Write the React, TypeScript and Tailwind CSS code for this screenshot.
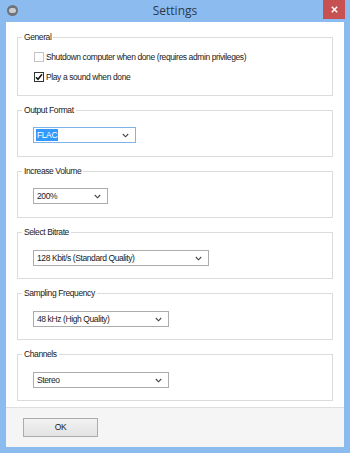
import React from "react";

function Chevron() {
  return (
    <svg width="7" height="5" viewBox="0 0 7 5" className="shrink-0">
      <path d="M0.8 1 L3.5 3.8 L6.2 1" fill="none" stroke="#444" strokeWidth="1.1" />
    </svg>
  );
}

function Select({ value, width, focused }: { value: string; width: string; focused?: boolean }) {
  return (
    <div
      className={`flex h-[16px] items-center justify-between border bg-white pl-[2px] pr-[6px] ${width} ${
        focused ? "border-[#7eb4ea]" : "border-[#acacac]"
      }`}
    >
      {focused ? (
        <span className="bg-[#3399ff] px-[1px] leading-[12px] text-white">{value}</span>
      ) : (
        <span className="px-[1px] leading-[12px] text-[#1a1a1a]">{value}</span>
      )}
      <Chevron />
    </div>
  );
}

function Group({ label, h, children }: { label: string; h: string; children: React.ReactNode }) {
  return (
    <fieldset className={`m-0 border border-[#dcdcdc] p-0 ${h}`}>
      <legend className="ml-[4px] px-[2px] leading-[14px] text-[#1a1a1a]">{label}</legend>
      {children}
    </fieldset>
  );
}

export default function App() {
  return (
    <div
      className="flex h-[453px] w-[350px] flex-col bg-[#8cbbf0] text-[8.5px] tracking-[-0.4px]"
      style={{ fontFamily: '"Liberation Sans", Arial, sans-serif' }}
    >
      {/* title bar */}
      <div className="relative flex h-[22px] shrink-0 items-center justify-center">
        <div className="absolute left-[7px] top-[5px] flex h-[11px] w-[11px] items-center justify-center rounded-full bg-[#6f7378]">
          <div className="h-[5px] w-[7px] rounded-full bg-[#c9ccd0]" />
        </div>
        <span
          className="text-[12px] tracking-normal text-[#2b3a4a]"
          style={{ fontFamily: '"Open Sans", "Liberation Sans", sans-serif' }}
        >
          Settings
        </span>
        <div className="absolute right-[5px] top-0 flex h-[19px] w-[22px] items-center justify-center bg-[#c75050]">
          <svg width="7" height="7" viewBox="0 0 7 7">
            <path d="M0.8 0.8 L6.2 6.2 M6.2 0.8 L0.8 6.2" stroke="#fff" strokeWidth="1.5" />
          </svg>
        </div>
      </div>

      {/* client */}
      <div className="mx-[6px] mb-[6px] flex flex-1 flex-col bg-white">
        <div className="flex flex-col gap-[7px] px-[11px] pb-[6px] pt-[8px]">
          <Group label="General" h="h-[66px]">
            <div className="flex flex-col gap-[7px] pl-[16px] pt-[7px]">
              <div className="flex items-center gap-[2px]">
                <div className="h-[10px] w-[10px] border border-[#c4c4c4] bg-white" />
                <span className="text-[#1a1a1a]">Shutdown computer when done (requires admin privileges)</span>
              </div>
              <div className="flex items-center gap-[2px]">
                <div className="flex h-[10px] w-[10px] items-center justify-center border border-[#333] bg-white">
                  <svg width="8" height="8" viewBox="0 0 8 8">
                    <path d="M1 4.2 L3 6.3 L7 1.3" fill="none" stroke="#111" strokeWidth="1.5" />
                  </svg>
                </div>
                <span className="text-[#1a1a1a]">Play a sound when done</span>
              </div>
            </div>
          </Group>
          <Group label="Output Format" h="h-[54px]">
            <div className="pl-[15px] pt-[10px]">
              <Select value="FLAC" width="w-[103px]" focused />
            </div>
          </Group>
          <Group label="Increase Volume" h="h-[54px]">
            <div className="pl-[15px] pt-[10px]">
              <Select value="200%" width="w-[75px]" />
            </div>
          </Group>
          <Group label="Select Bitrate" h="h-[54px]">
            <div className="pl-[15px] pt-[11px]">
              <Select value="128 Kbit/s (Standard Quality)" width="w-[176px]" />
            </div>
          </Group>
          <Group label="Sampling Frequency" h="h-[54px]">
            <div className="pl-[15px] pt-[11px]">
              <Select value="48 kHz (High Quality)" width="w-[136px]" />
            </div>
          </Group>
          <Group label="Channels" h="h-[54px]">
            <div className="pl-[15px] pt-[11px]">
              <Select value="Stereo" width="w-[136px]" />
            </div>
          </Group>
        </div>
        <div className="flex flex-1 items-start border-t border-[#dfdfdf] bg-[#f5f5f5] pl-[17px] pt-[10px]">
          <button className="flex h-[19px] w-[75px] items-center justify-center border border-[#acacac] bg-gradient-to-b from-[#f2f2f2] to-[#e3e3e3] text-[8.5px] text-[#1a1a1a]">
            OK
          </button>
        </div>
      </div>
    </div>
  );
}
